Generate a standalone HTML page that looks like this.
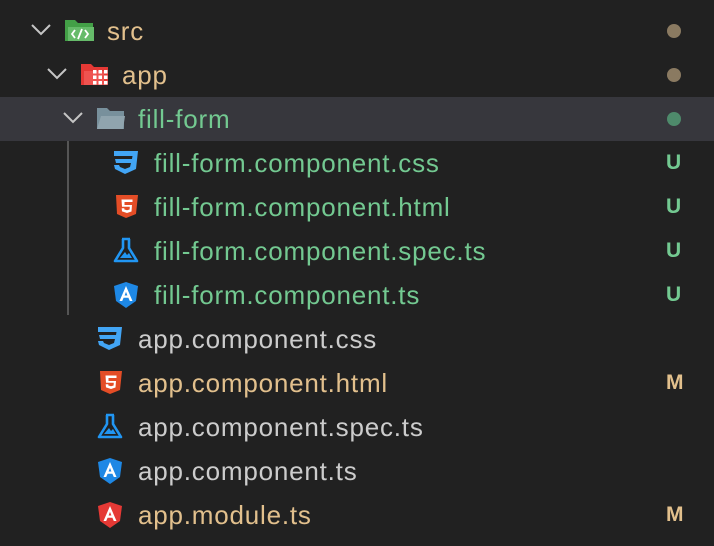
<!DOCTYPE html>
<html><head><style>
body{margin:0;width:714px;height:546px;background:#212121;font-family:"Liberation Sans",sans-serif;overflow:hidden;position:relative}
.r{position:absolute;left:0;width:714px;height:44px}
.r span.t{position:absolute;top:7px;font-size:26px;letter-spacing:0.8px;line-height:30px;white-space:nowrap}
.r svg{position:absolute}
.d{position:absolute;left:667px;top:15px;width:14px;height:14px;border-radius:50%}
.b{position:absolute;left:666px;top:8px;font-size:21px;line-height:28px;font-weight:bold}
.tan{color:#e2c08d}.grn{color:#73c991}.gry{color:#cccccc}
</style></head><body>
<div style="position:absolute;left:0;top:97px;width:714px;height:44px;background:#37373d"></div>
<div style="position:absolute;left:67px;top:141px;width:2px;height:174px;background:#555"></div>

<div class="r" style="top:9px">
<svg style="left:30px;top:14px" width="22" height="13"><path d="M2 2l9 9 9-9" fill="none" stroke="#c5c5c5" stroke-width="2"/></svg>
<svg style="left:64px;top:8px" width="32" height="28"><path d="M1 3h10l3 3h15v18H1z" fill="#43a047"/><path d="M4 10h26v14H4z" fill="#66bb6a"/><path d="M11 13l-3 4 3 4M21 13l3 4-3 4M18 12l-4 10" stroke="#fff" stroke-width="1.8" fill="none"/></svg>
<span class="t tan" style="left:107px">src</span><div class="d" style="background:#8a7a61"></div></div>

<div class="r" style="top:53px">
<svg style="left:46px;top:14px" width="22" height="13"><path d="M2 2l9 9 9-9" fill="none" stroke="#c5c5c5" stroke-width="2"/></svg>
<svg style="left:80px;top:8px" width="34" height="28"><path d="M1 3h10l3 3h14v18H1z" fill="#e53935"/><path d="M4 10h20v14H4z" fill="#ef5350"/><g fill="#fff"><rect x="13" y="9" width="3.5" height="3.5"/><rect x="18.5" y="9" width="3.5" height="3.5"/><rect x="24" y="9" width="3.5" height="3.5"/><rect x="13" y="14.5" width="3.5" height="3.5"/><rect x="18.5" y="14.5" width="3.5" height="3.5"/><rect x="24" y="14.5" width="3.5" height="3.5"/><rect x="13" y="20" width="3.5" height="3.5"/><rect x="18.5" y="20" width="3.5" height="3.5"/><rect x="24" y="20" width="3.5" height="3.5"/></g></svg>
<span class="t tan" style="left:122px">app</span><div class="d" style="background:#8a7a61"></div></div>

<div class="r" style="top:97px">
<svg style="left:62px;top:14px" width="22" height="13"><path d="M2 2l9 9 9-9" fill="none" stroke="#c5c5c5" stroke-width="2"/></svg>
<svg style="left:96px;top:8px" width="32" height="28"><path d="M1 3h10l3 3h14v18H1z" fill="#78909c"/><path d="M5 11h24l-2 13H1z" fill="#90a4ae"/></svg>
<span class="t grn" style="left:138px">fill-form</span><div class="d" style="background:#4e8a6b"></div></div>

<div class="r" style="top:141px">
<svg style="left:112px;top:9px" width="28" height="26"><path d="M2 1h24l-2 18-11 5-10-5-1-4h5l1 2 5 2 5-2 1-4H4l-1-4h17l.5-3H2z" fill="#42a5f5"/></svg>
<span class="t grn" style="left:154px">fill-form.component.css</span><span class="b grn">U</span></div>
<div class="r" style="top:185px">
<svg style="left:115px;top:9px" width="24" height="26"><path d="M1 1h22l-2 19-10 4-9-4z" fill="#e44d26"/><path d="M6.5 5.5h11v2.5h-8v3h7.5l-.5 6.5L12 19l-5-1.6-.3-3.2h2.6l.1 1.3 2.6.8 2.6-.8.2-2.8H7z" fill="#fff"/></svg>
<span class="t grn" style="left:154px">fill-form.component.html</span><span class="b grn">U</span></div>
<div class="r" style="top:229px">
<svg style="left:112px;top:8px" width="28" height="28"><path d="M10 2h8M11 2v9L3 24h22L17 11V2" fill="none" stroke="#2196f3" stroke-width="2.6" stroke-linejoin="round"/><path d="M8 21l5-6 2 3 2-2 3 5z" fill="#2196f3"/></svg>
<span class="t grn" style="left:154px">fill-form.component.spec.ts</span><span class="b grn">U</span></div>
<div class="r" style="top:273px">
<svg style="left:112px;top:8px" width="28" height="28"><path d="M14 1l12 4-2 15-10 7-10-7L2 5z" fill="#1e88e5"/><path d="M14 5l-6.5 15h2.7l1.4-3.3h4.8l1.4 3.3h2.7zM12.6 14.5l1.4-3.6 1.4 3.6z" fill="#fff"/></svg>
<span class="t grn" style="left:154px">fill-form.component.ts</span><span class="b grn">U</span></div>

<div class="r" style="top:317px">
<svg style="left:96px;top:9px" width="28" height="26"><path d="M2 1h24l-2 18-11 5-10-5-1-4h5l1 2 5 2 5-2 1-4H4l-1-4h17l.5-3H2z" fill="#42a5f5"/></svg>
<span class="t gry" style="left:138px">app.component.css</span></div>
<div class="r" style="top:361px">
<svg style="left:99px;top:9px" width="24" height="26"><path d="M1 1h22l-2 19-10 4-9-4z" fill="#e44d26"/><path d="M6.5 5.5h11v2.5h-8v3h7.5l-.5 6.5L12 19l-5-1.6-.3-3.2h2.6l.1 1.3 2.6.8 2.6-.8.2-2.8H7z" fill="#fff"/></svg>
<span class="t tan" style="left:138px">app.component.html</span><span class="b tan">M</span></div>
<div class="r" style="top:405px">
<svg style="left:96px;top:8px" width="28" height="28"><path d="M10 2h8M11 2v9L3 24h22L17 11V2" fill="none" stroke="#2196f3" stroke-width="2.6" stroke-linejoin="round"/><path d="M8 21l5-6 2 3 2-2 3 5z" fill="#2196f3"/></svg>
<span class="t gry" style="left:138px">app.component.spec.ts</span></div>
<div class="r" style="top:449px">
<svg style="left:96px;top:8px" width="28" height="28"><path d="M14 1l12 4-2 15-10 7-10-7L2 5z" fill="#1e88e5"/><path d="M14 5l-6.5 15h2.7l1.4-3.3h4.8l1.4 3.3h2.7zM12.6 14.5l1.4-3.6 1.4 3.6z" fill="#fff"/></svg>
<span class="t gry" style="left:138px">app.component.ts</span></div>
<div class="r" style="top:493px">
<svg style="left:96px;top:8px" width="28" height="28"><path d="M14 1l12 4-2 15-10 7-10-7L2 5z" fill="#e53935"/><path d="M14 5l-6.5 15h2.7l1.4-3.3h4.8l1.4 3.3h2.7zM12.6 14.5l1.4-3.6 1.4 3.6z" fill="#fff"/></svg>
<span class="t tan" style="left:138px">app.module.ts</span><span class="b tan">M</span></div>
</body></html>
